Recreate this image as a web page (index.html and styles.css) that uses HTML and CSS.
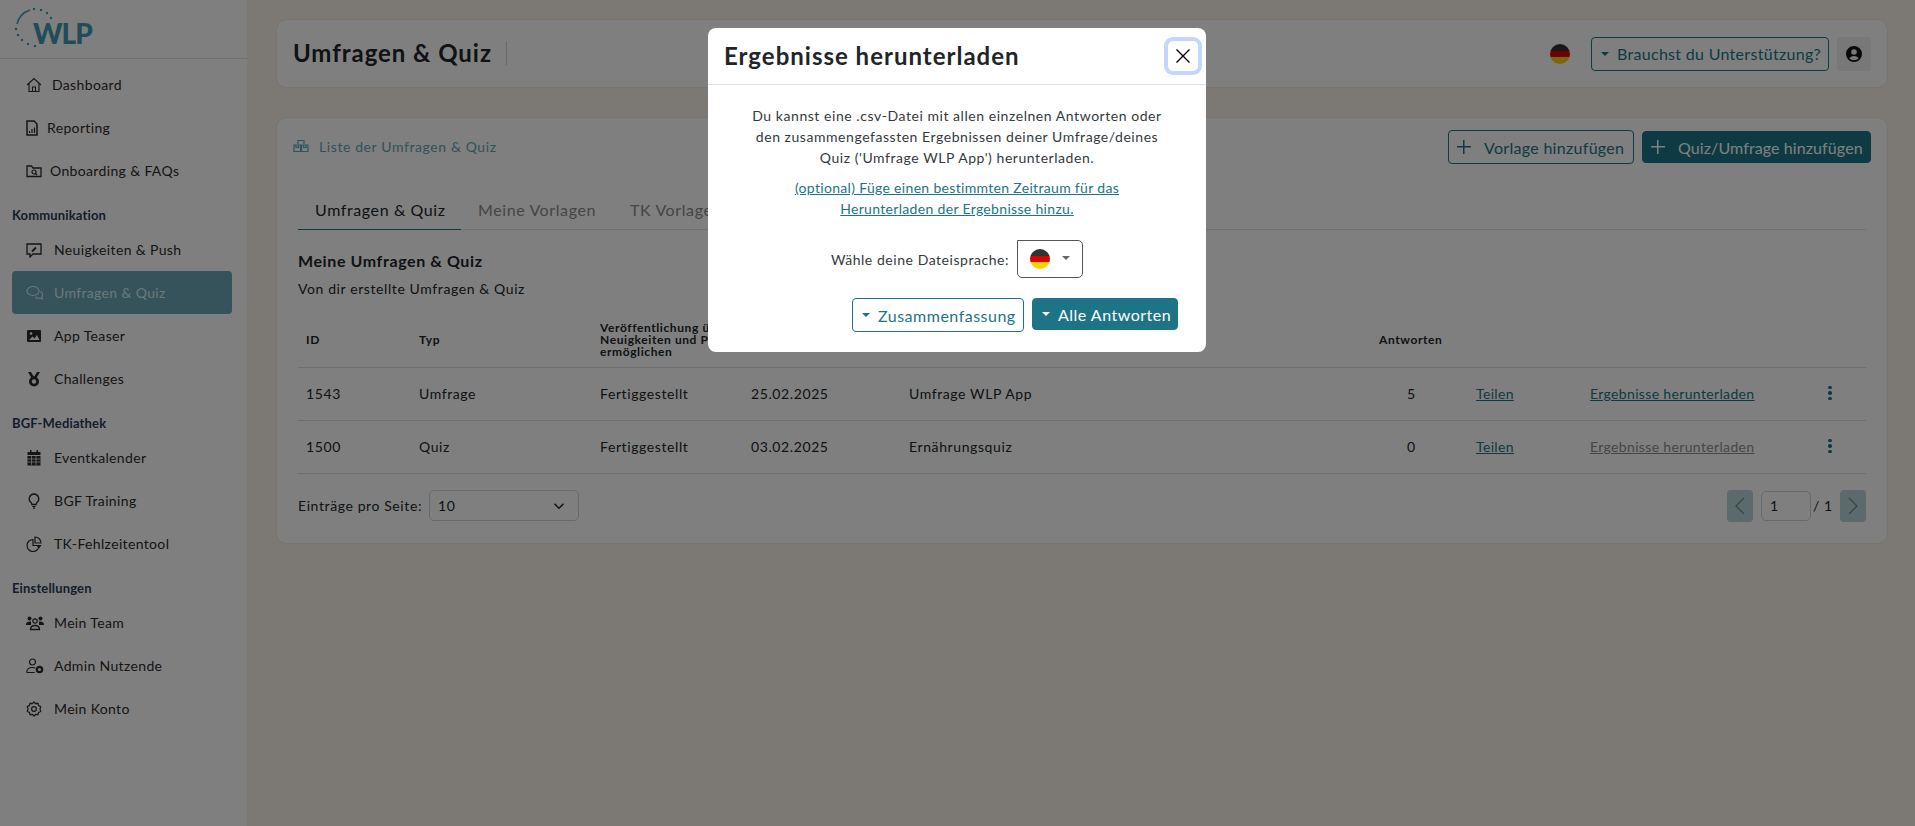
FILE: index.html
```html
<!DOCTYPE html>
<html lang="de">
<head>
    <meta charset="UTF-8">
    <meta name="viewport" content="width=device-width, initial-scale=1.0">
    <title>Umfragen &amp; Quiz</title>
    <link rel="stylesheet" href="styles.css">
</head>
<body>
    <div class="layout">
        <!-- Sidebar -->
        <aside class="sidebar">
            <div class="logo">
                <svg width="100" height="50" viewBox="0 0 100 50">
                    <path d="M17 24a20 20 0 0 1 13-14" fill="none" stroke="#3f9ab0" stroke-width="1.6"/>
                    <g fill="#3f9ab0">
                        <circle cx="34" cy="9" r="1.2"/><circle cx="41" cy="10" r="1.2"/><circle cx="47" cy="13" r="1.2"/><circle cx="51" cy="18" r="1.2"/>
                        <circle cx="16" cy="29" r="1.2"/><circle cx="18" cy="35" r="1.2"/><circle cx="22" cy="40" r="1.2"/><circle cx="28" cy="44" r="1.2"/><circle cx="35" cy="46" r="1.2"/>
                    </g>
                    <text x="33" y="44" class="logo-text">WLP</text>
                </svg>
            </div>
            <nav class="nav">
                <a class="nav-item nav-item-first">
                    <svg class="nav-icon" viewBox="0 0 16 16"><path d="M1 8l7-6.5L15 8M3 6.500V14.500h10V6.500M6.500 14.500V10h3v4.500" fill="none" stroke="currentColor" stroke-width="1.100"/></svg>
                    <span class="nav-label-a">Dashboard</span>
                </a>
                <a class="nav-item">
                    <svg class="nav-icon nav-icon-narrow" viewBox="0 0 12 16"><path d="M1 1h7l3 3v11H1z" fill="none" stroke="currentColor" stroke-width="1.500"/><path d="M3.500 13v-2M6 13V9M8.500 13V7.500" stroke="currentColor" stroke-width="1.200"/></svg>
                    <span class="nav-label-b">Reporting</span>
                </a>
                <a class="nav-item">
                    <svg class="nav-icon" viewBox="0 0 16 16"><path d="M1 13.500V3h4.500l1.500 2h8v8.500z" fill="none" stroke="currentColor" stroke-width="1.300"/><circle cx="8" cy="9" r="2" fill="none" stroke="currentColor" stroke-width="1.200"/><path d="M9.500 10.500l1.500 1.500" stroke="currentColor" stroke-width="1.200"/></svg>
                    <span class="nav-label-c">Onboarding &amp; FAQs</span>
                </a>

                <div class="nav-heading">Kommunikation</div>
                <a class="nav-item">
                    <svg class="nav-icon" viewBox="0 0 16 16"><path d="M1 2h14v10H7l-3 3v-3H1z" fill="none" stroke="currentColor" stroke-width="1.300"/><path d="M6 9.500l4-4" stroke="currentColor" stroke-width="1.800"/></svg>
                    <span>Neuigkeiten &amp; Push</span>
                </a>
                <a class="nav-item nav-item-active">
                    <svg class="nav-icon nav-icon-wide" viewBox="0 0 18 16"><ellipse cx="7" cy="6" rx="6" ry="4.500" fill="none" stroke="currentColor" stroke-width="1.100"/><path d="M14.500 6.500c2 1 2.500 3.500 1.500 5l.5 2.500-3-1c-1.500.5-3 0-4-1" fill="none" stroke="currentColor" stroke-width="1.100"/></svg>
                    <span>Umfragen &amp; Quiz</span>
                </a>
                <a class="nav-item">
                    <svg class="nav-icon" viewBox="0 0 16 16"><rect x="1" y="2" width="14" height="12" rx="1" fill="currentColor"/><circle cx="5" cy="5.500" r="1.300" fill="#fff"/><path d="M3 12l3.500-3.500 2 2L11 7l2.500 5z" fill="#fff"/></svg>
                    <span>App Teaser</span>
                </a>
                <a class="nav-item">
                    <svg class="nav-icon" viewBox="0 0 16 16"><path d="M2 1h3l3 5 3-5h3l-3.500 6H5.500z" fill="currentColor"/><circle cx="8" cy="10.500" r="3.600" fill="none" stroke="currentColor" stroke-width="2.800"/></svg>
                    <span>Challenges</span>
                </a>

                <div class="nav-heading">BGF-Mediathek</div>
                <a class="nav-item">
                    <svg class="nav-icon" viewBox="0 0 16 16"><path d="M4 0h1.500v2h5V0H12v2h2.500v3h-13V2H4zM1.500 6h13v9.500h-13z" fill="currentColor"/><path d="M1.500 9h13M1.500 12h13M5.500 6v9M10 6v9" stroke="#fff" stroke-width=".7"/></svg>
                    <span>Eventkalender</span>
                </a>
                <a class="nav-item">
                    <svg class="nav-icon" viewBox="0 0 16 16"><path d="M8 1a4.800 4.800 0 0 0-3 8.500c.6.600.8 1 .9 2h4.200c.1-1 .3-1.400.9-2A4.800 4.800 0 0 0 8 1z" fill="none" stroke="currentColor" stroke-width="1.300"/><path d="M6.300 13.500h3.400M7 15.200h2" stroke="currentColor" stroke-width="1.200"/></svg>
                    <span>BGF Training</span>
                </a>
                <a class="nav-item">
                    <svg class="nav-icon" viewBox="0 0 16 16"><path d="M7 3.500a6 6 0 1 0 6 6H7z" fill="none" stroke="currentColor" stroke-width="1.200"/><path d="M9 1v6h6a6 6 0 0 0-6-6z" fill="none" stroke="currentColor" stroke-width="1.200"/><path d="M10 9h5.500l-2.500 3.500z" fill="currentColor"/></svg>
                    <span>TK-Fehlzeitentool</span>
                </a>

                <div class="nav-heading">Einstellungen</div>
                <a class="nav-item">
                    <svg class="nav-icon nav-icon-wide" viewBox="0 0 18 16"><circle cx="3.500" cy="3.500" r="2" fill="currentColor"/><circle cx="14.500" cy="3.500" r="2" fill="currentColor"/><circle cx="9" cy="6" r="2.200" fill="none" stroke="currentColor" stroke-width="1.200"/><path d="M0 10c0-3 2-3.500 5-3.500L5 10zM18 10c0-3-2-3.500-5-3.500l0 3.500z" fill="currentColor"/><path d="M4.500 14.500c0-3 2-4 4.500-4s4.500 1 4.500 4z" fill="none" stroke="currentColor" stroke-width="1.300"/></svg>
                    <span>Mein Team</span>
                </a>
                <a class="nav-item">
                    <svg class="nav-icon nav-icon-wide" viewBox="0 0 18 16"><circle cx="6.500" cy="4" r="3" fill="none" stroke="currentColor" stroke-width="1.200"/><path d="M.7 14.500c0-3.500 2.500-5 5.800-5 1 0 2 .1 2.800.5M.7 14.500h8" fill="none" stroke="currentColor" stroke-width="1.200"/><circle cx="13.500" cy="11.500" r="2.700" fill="none" stroke="currentColor" stroke-width="2.200"/></svg>
                    <span>Admin Nutzende</span>
                </a>
                <a class="nav-item">
                    <svg class="nav-icon" viewBox="0 0 16 16"><circle cx="8" cy="8" r="2.400" fill="none" stroke="currentColor" stroke-width="1.200"/><path d="M8 1l1.600 1.700 2.300-.4.700 2.300 2.100 1L14 8l.7 2.400-2.100 1-.7 2.300-2.300-.4L8 15l-1.600-1.700-2.300.4-.7-2.300-2.100-1L2 8l-.7-2.400 2.100-1 .7-2.300 2.300.4z" fill="none" stroke="currentColor" stroke-width="1.200"/></svg>
                    <span>Mein Konto</span>
                </a>
            </nav>
        </aside>

        <main class="content">
            <!-- Kopfzeile -->
            <header class="topbar card">
                <h1 class="page-title">Umfragen &amp; Quiz</h1>
                <div class="topbar-actions">
                    <span class="flag"></span>
                    <button class="btn btn-outline btn-support"><span class="caret"></span>Brauchst du Unterstützung?</button>
                    <button class="btn-avatar">
                        <svg width="16" height="16" viewBox="0 0 16 16"><path fill="#111" fill-rule="evenodd" d="M8 0a8 8 0 1 1 0 16A8 8 0 0 1 8 0zm0 3.200a2.800 2.800 0 1 0 0 5.600 2.800 2.800 0 0 0 0-5.600zM3.300 12.300c1 1.200 2.900 2 4.700 2s3.700-.8 4.700-2c-.6-1.300-2.600-2.300-4.700-2.300s-4.100 1-4.700 2.300z"/></svg>
                    </button>
                </div>
            </header>

            <section class="list card">
                <div class="list-head">
                    <div class="list-crumb">
                        <svg width="16" height="16" viewBox="0 0 16 16"><path d="M5 6V2.500h6V6M1 7h6.500v6.500H1zM8.500 7H15v6.500H8.500z M3 7v2.500h2.500V7M10.500 7v2.500H13V7" fill="none" stroke="currentColor" stroke-width="1.200"/></svg>
                        <span>Liste der Umfragen &amp; Quiz</span>
                    </div>
                    <div class="list-actions">
                        <button class="btn btn-outline btn-add"><span class="plus"></span>Vorlage hinzufügen</button>
                        <button class="btn btn-solid btn-add"><span class="plus"></span>Quiz/Umfrage hinzufügen</button>
                    </div>
                </div>

                <div class="tabs">
                    <a class="tab tab-active">Umfragen &amp; Quiz</a>
                    <a class="tab">Meine Vorlagen</a>
                    <a class="tab">TK Vorlagen</a>
                </div>

                <h2 class="list-title">Meine Umfragen &amp; Quiz</h2>
                <p class="list-sub">Von dir erstellte Umfragen &amp; Quiz</p>

                <table class="table">
                    <thead>
                        <tr>
                            <th>ID</th>
                            <th>Typ</th>
                            <th>Veröffentlichung über Neuigkeiten und Push ermöglichen</th>
                            <th>Erstellt am</th>
                            <th>Name</th>
                            <th>Antworten</th>
                            <th></th>
                            <th></th>
                            <th></th>
                        </tr>
                    </thead>
                    <tbody>
                        <tr>
                            <td>1543</td>
                            <td>Umfrage</td>
                            <td>Fertiggestellt</td>
                            <td>25.02.2025</td>
                            <td>Umfrage WLP App</td>
                            <td class="num">5</td>
                            <td><a class="link">Teilen</a></td>
                            <td><a class="link">Ergebnisse herunterladen</a></td>
                            <td class="menu-cell"><span class="dots"><i></i><i></i><i></i></span></td>
                        </tr>
                        <tr>
                            <td>1500</td>
                            <td>Quiz</td>
                            <td>Fertiggestellt</td>
                            <td>03.02.2025</td>
                            <td>Ernährungsquiz</td>
                            <td class="num">0</td>
                            <td><a class="link">Teilen</a></td>
                            <td><a class="link link-off">Ergebnisse herunterladen</a></td>
                            <td class="menu-cell"><span class="dots"><i></i><i></i><i></i></span></td>
                        </tr>
                    </tbody>
                </table>

                <div class="table-foot">
                    <div class="per-page">
                        <span>Einträge pro Seite:</span>
                        <div class="select-box">
                            <span>10</span>
                            <svg width="12" height="12" viewBox="0 0 16 16"><path d="M2 5l6 6 6-6" fill="none" stroke="#222" stroke-width="2"/></svg>
                        </div>
                    </div>
                    <div class="pager">
                        <span class="page-btn"><svg width="10" height="18" viewBox="0 0 10 18"><path d="M9 1L1 9l8 8" fill="none" stroke="#5d8a96" stroke-width="1.200"/></svg></span>
                        <span class="page-input">1</span>
                        <span class="page-total">/ 1</span>
                        <span class="page-btn"><svg width="10" height="18" viewBox="0 0 10 18"><path d="M1 1l8 8-8 8" fill="none" stroke="#5d8a96" stroke-width="1.200"/></svg></span>
                    </div>
                </div>
            </section>
        </main>
    </div>

    <!-- Dialog -->
    <div class="backdrop">
        <div class="modal">
            <div class="modal-head">
                <h3>Ergebnisse herunterladen</h3>
                <button class="modal-close">
                    <svg width="14" height="14" viewBox="0 0 14 14"><path d="M.5.5l13 13M13.500.5l-13 13" stroke="#000" stroke-width="1.400"/></svg>
                </button>
            </div>
            <div class="modal-body">
                <p>Du kannst eine .csv-Datei mit allen einzelnen Antworten oder den zusammengefassten Ergebnissen deiner Umfrage/deines Quiz ('Umfrage WLP App') herunterladen.</p>
                <a class="modal-link">(optional) Füge einen bestimmten Zeitraum für das Herunterladen der Ergebnisse hinzu.</a>
                <div class="lang-row">
                    <span>Wähle deine Dateisprache:</span>
                    <div class="lang-select"><span class="flag"></span><span class="caret caret-grey"></span></div>
                </div>
                <div class="modal-actions">
                    <button class="btn btn-modal-outline"><span class="caret"></span>Zusammenfassung</button>
                    <button class="btn btn-modal-solid"><span class="caret caret-white"></span>Alle Antworten</button>
                </div>
            </div>
        </div>
    </div>
</body>
</html>
```

FILE: styles.css
```css
* {
    box-sizing: border-box;
}
body {
    font-family: 'Lato', 'Noto Sans', sans-serif;
    margin: 0;
    background-color: #f9f1e8;
    color: #212529;
    font-size: 14px;
    letter-spacing: 0.6px;
    height: 826px;
    overflow: hidden;
}
.layout {
    display: flex;
    height: 100%;
}
button {
    font-family: inherit;
    letter-spacing: inherit;
}

/* Sidebar */
.sidebar {
    width: 247px;
    flex-shrink: 0;
    background-color: #fff;
}
.logo {
    height: 59px;
    border-bottom: 1px solid #dfe2e6;
}
.logo svg {
    display: block;
}
.logo-text {
    font-family: 'Lato', sans-serif;
    font-weight: 900;
    font-size: 28px;
    fill: #3f9ab0;
    letter-spacing: -1px;
}
.nav {
    padding: 4px 15px 0 12px;
    letter-spacing: 0.35px;
}
.nav-item {
    display: flex;
    align-items: center;
    height: 43px;
    padding-left: 14px;
    border-radius: 4px;
    color: #2b2b2b;
}
.nav-icon {
    width: 16px;
    height: 16px;
    margin-right: 12px;
    flex-shrink: 0;
}
.nav-icon-wide {
    width: 18px;
    margin-right: 10px;
}
.nav-icon-narrow {
    width: 12px;
    margin-right: 9px;
}
.nav-label-a {
    margin-left: -2px;
}
.nav-label-c {
    margin-left: -4px;
}
.nav-item-active {
    background-color: #6ca6b6;
    color: #d5f0f5;
}
.nav-heading {
    margin: 13px 0 3px;
    height: 20px;
    line-height: 20px;
    font-size: 13px;
    font-weight: 700;
    letter-spacing: 0.15px;
    color: #2a3a5a;
}

/* Content */
.content {
    flex: 1;
    padding: 20px 28px 0 30px;
}
.card {
    background-color: #fff;
    border-radius: 9px;
    box-shadow: 0 0 2px rgba(0, 0, 0, 0.12);
}
.topbar {
    display: flex;
    justify-content: space-between;
    align-items: center;
    height: 67px;
    padding: 0 16px;
}
.page-title {
    margin: 0 0 1px;
    padding-right: 14px;
    height: 24px;
    line-height: 24px;
    border-right: 1px solid #c9ccd0;
    font-size: 24px;
    font-weight: 700;
    letter-spacing: 0.95px;
    color: #212529;
}
.topbar-actions {
    display: flex;
    align-items: center;
    gap: 8px;
}
.topbar-actions .flag {
    margin-right: 13px;
}
.flag {
    display: inline-block;
    width: 20px;
    height: 20px;
    border-radius: 50%;
    background: linear-gradient(#333 33%, #dd0000 33% 66%, #ffce00 66%);
}
.btn {
    display: inline-flex;
    align-items: center;
    border-radius: 4px;
    font-size: 16px;
    height: 34px;
    padding: 0 8px;
    white-space: nowrap;
    letter-spacing: 0.3px;
    cursor: pointer;
}
.btn-outline {
    background-color: #fff;
    border: 1px solid #1c7486;
    color: #1c7486;
}
.btn-solid {
    background-color: #1c7486;
    border: 1px solid #1c7486;
    color: #fff;
}
.btn-support {
    width: 238px;
}
.btn-avatar {
    width: 34px;
    height: 34px;
    display: flex;
    align-items: center;
    justify-content: center;
    padding: 0;
    border: none;
    border-radius: 4px;
    background-color: #f0f0f0;
}
.caret {
    display: inline-block;
    width: 0;
    height: 0;
    margin: 0 8px 0 1px;
    border-top: 4px solid #1c7486;
    border-left: 4px solid transparent;
    border-right: 4px solid transparent;
}
.caret-white {
    border-top-color: #fff;
}
.caret-grey {
    border-top-color: #666;
    margin: 0 0 2px 0;
}
.plus {
    display: inline-block;
    width: 14px;
    height: 14px;
    margin: 0 13px 0 0;
    flex-shrink: 0;
    background:
        linear-gradient(currentColor, currentColor) center / 100% 1.5px no-repeat,
        linear-gradient(currentColor, currentColor) center / 1.5px 100% no-repeat;
}

/* List card */
.list {
    margin-top: 31px;
    height: 425px;
    padding: 12px 21px 0 21px;
}
.list-head {
    display: flex;
    justify-content: space-between;
    align-items: center;
    margin: 0 -5px 0 -5px;
}
.list-crumb {
    display: flex;
    align-items: center;
    gap: 10px;
    padding-bottom: 2px;
    color: #5fa6b6;
}
.list-actions {
    display: flex;
    align-items: center;
    gap: 8px;
}
.btn-add {
    padding: 0 7px 0 8px;
}
.btn-outline.btn-add {
    width: 186px;
}
.btn-solid.btn-add {
    width: 229px;
    height: 32px;
    letter-spacing: 0.1px;
}
.tabs {
    display: flex;
    margin-top: 24px;
    height: 42px;
    border-bottom: 1px solid #e0e3e6;
}
.tab {
    padding: 12px 17px 0;
    font-size: 16px;
    color: #8a8a8a;
    white-space: nowrap;
}
.tab-active {
    width: 163px;
    margin-bottom: -1px;
    color: #212529;
    border-bottom: 1px solid #1c7486;
}
.list-title {
    margin: 21px 0 0;
    font-size: 16px;
    font-weight: 700;
    line-height: 20px;
}
.list-sub {
    margin: 8px 0 0;
    line-height: 20px;
}
.table {
    width: 100%;
    margin-top: 15px;
    border-collapse: collapse;
    table-layout: fixed;
}
.table th {
    height: 53px;
    padding: 0 8px;
    font-size: 12px;
    line-height: 12px;
    font-weight: 700;
    text-align: left;
    vertical-align: middle;
}
.table td {
    height: 53px;
    padding: 0 8px;
    vertical-align: middle;
}
.table tr {
    border-bottom: 1px solid #dcdfe3;
}
.table th:nth-child(1) { width: 113px; }
.table th:nth-child(2) { width: 181px; }
.table th:nth-child(3) { width: 151px; }
.table th:nth-child(4) { width: 158px; }
.table th:nth-child(5) { width: 470px; }
.table th:nth-child(6) { width: 97px; }
.table th:nth-child(7) { width: 114px; }
.table th:nth-child(8) { width: 240px; }
.table td.num {
    padding-left: 36px;
}
.table td.menu-cell {
    padding-left: 6px;
}
.link {
    color: #1c7486;
    text-decoration: underline;
    letter-spacing: 0.35px;
}
.link-off {
    color: #8d8d8d;
}
.dots {
    display: flex;
    flex-direction: column;
    gap: 2px;
    margin-bottom: 1px;
}
.dots i {
    display: block;
    width: 3.5px;
    height: 3.5px;
    border-radius: 50%;
    background-color: #1c7486;
}
.table-foot {
    display: flex;
    justify-content: space-between;
    align-items: center;
    margin-top: 16px;
}
.per-page {
    display: flex;
    align-items: center;
    gap: 7px;
}
.select-box {
    display: flex;
    justify-content: space-between;
    align-items: center;
    width: 150px;
    height: 31px;
    padding: 0 13px 0 8px;
    border: 1px solid #ced4da;
    border-radius: 5px;
}
.pager {
    display: flex;
    align-items: center;
}
.page-btn {
    display: flex;
    align-items: center;
    justify-content: center;
    width: 26px;
    height: 32px;
    border-radius: 4px;
    background-color: #b8d5db;
}
.page-input {
    display: block;
    width: 50px;
    height: 30px;
    line-height: 28px;
    margin-left: 8px;
    padding-left: 8px;
    border: 1px solid #ced4da;
    border-radius: 5px;
}
.page-total {
    width: 29px;
    padding-left: 2px;
}

/* Dialog */
.backdrop {
    position: fixed;
    inset: 0;
    display: flex;
    justify-content: center;
    align-items: flex-start;
    padding: 28px 1px 0 0;
    background-color: rgba(0, 0, 0, 0.5);
}
.modal {
    width: 498px;
    height: 324px;
    background-color: #fff;
    border-radius: 8px;
}
.modal-head {
    display: flex;
    justify-content: space-between;
    align-items: center;
    height: 57px;
    padding: 0 8px 0 16px;
    border-bottom: 1px solid #dee2e6;
}
.modal-head h3 {
    margin: 0 0 1px;
    font-size: 24px;
    font-weight: 700;
    letter-spacing: 1px;
    color: #212529;
}
.modal-close {
    display: flex;
    align-items: center;
    justify-content: center;
    width: 30px;
    height: 30px;
    padding: 0;
    background-color: #fff;
    border: none;
    border-radius: 5px;
    box-shadow: 0 0 0 4px #c2d7fb;
}
.modal-body {
    padding: 20px 28px 0;
    text-align: center;
    line-height: 21px;
    letter-spacing: 0.55px;
    color: #343a40;
}
.modal-body p {
    margin: 0 12px 9px;
}
.modal-link {
    display: block;
    margin: 0 40px;
    color: #1c7486;
    text-decoration: underline;
    letter-spacing: 0.32px;
}
.lang-row {
    display: flex;
    justify-content: center;
    align-items: center;
    gap: 8px;
    margin-top: 21px;
}
.lang-select {
    display: flex;
    align-items: center;
    gap: 12px;
    width: 66px;
    height: 38px;
    padding-left: 12px;
    border: 1px solid #555;
    border-radius: 0 5px 5px 5px;
}
.modal-actions {
    display: flex;
    justify-content: flex-end;
    align-items: flex-start;
    gap: 8px;
    margin-top: 20px;
}
.btn-modal-outline {
    width: 172px;
    background-color: #fff;
    border: 1px solid #1c7486;
    color: #1c7486;
    letter-spacing: 0.5px;
}
.btn-modal-solid {
    width: 146px;
    height: 32px;
    background-color: #1c7486;
    border: 1px solid #1c7486;
    color: #fff;
    letter-spacing: 0.5px;
}
```
